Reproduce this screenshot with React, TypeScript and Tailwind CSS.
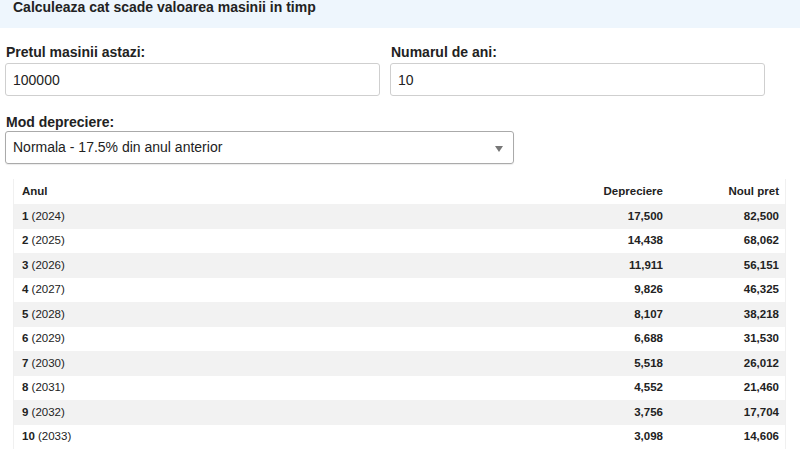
import React from "react";

interface RowType {
  label: number;
  year: number;
  depreciation: string;
  price: string;
}

const rows: RowType[] = [
  { label: 1, year: 2024, depreciation: "17,500", price: "82,500" },
  { label: 2, year: 2025, depreciation: "14,438", price: "68,062" },
  { label: 3, year: 2026, depreciation: "11,911", price: "56,151" },
  { label: 4, year: 2027, depreciation: "9,826", price: "46,325" },
  { label: 5, year: 2028, depreciation: "8,107", price: "38,218" },
  { label: 6, year: 2029, depreciation: "6,688", price: "31,530" },
  { label: 7, year: 2030, depreciation: "5,518", price: "26,012" },
  { label: 8, year: 2031, depreciation: "4,552", price: "21,460" },
  { label: 9, year: 2032, depreciation: "3,756", price: "17,704" },
  { label: 10, year: 2033, depreciation: "3,098", price: "14,606" },
];

const App = () => {
  return (
    <div className="w-[800px] h-[450px] overflow-hidden bg-white text-[#222] font-['Liberation_Sans',Arial,sans-serif]">
      <div className="h-[28px] bg-[#eef6fd] pl-[13px]">
        <h1 className="text-[14px] font-bold leading-4 -translate-y-[1px]">
          Calculeaza cat scade valoarea masinii in timp
        </h1>
      </div>

      <div className="pl-[5px] pt-[16px]">
        <div className="flex gap-[10px] w-[760px]">
          <div className="flex-1">
            <label className="block text-[14px] font-bold leading-4 pl-[1px] mb-[3px]">
              Pretul masinii astazi:
            </label>
            <input
              defaultValue="100000"
              className="w-full h-[33px] px-[7px] text-[14px] border border-[#cfcfcf] rounded-[3px] outline-none"
            />
          </div>
          <div className="flex-1">
            <label className="block text-[14px] font-bold leading-4 pl-[1px] mb-[3px]">
              Numarul de ani:
            </label>
            <input
              defaultValue="10"
              className="w-full h-[33px] px-[7px] text-[14px] border border-[#cfcfcf] rounded-[3px] outline-none"
            />
          </div>
        </div>

        <div className="mt-[18px] w-[509px]">
          <label className="block text-[14px] font-bold leading-4 pl-[1px] mb-[1px]">
            Mod depreciere:
          </label>
          <div className="relative h-[33px] border border-[#aaaaaa] rounded-[3px] shadow-[0_1px_1px_rgba(0,0,0,0.08)] flex items-center px-[7px] text-[14px]">
            Normala - 17.5% din anul anterior
            <span className="absolute right-[10px] top-[14px] w-0 h-0 border-l-[4px] border-r-[4px] border-t-[6px] border-l-transparent border-r-transparent border-t-[#777]" />
          </div>
        </div>
      </div>

      <div className="ml-[13px] mt-[15px] w-[773px] border-l border-r border-[#f0f0f0] text-[11.5px]">
        <div className="grid grid-cols-[1fr_140px_116px] h-[25px] items-center font-bold">
          <div className="pl-[8px]">Anul</div>
          <div className="text-right pr-[6px]">Depreciere</div>
          <div className="text-right pr-[6px]">Noul pret</div>
        </div>
        {rows.map((r, i) => (
          <div
            key={r.label}
            className={`grid grid-cols-[1fr_140px_116px] h-[24.5px] items-center ${
              i % 2 === 0 ? "bg-[#f2f2f2]" : "bg-white"
            }`}
          >
            <div className="pl-[8px]">
              <b>{r.label}</b> ({r.year})
            </div>
            <div className="text-right pr-[6px] font-bold">{r.depreciation}</div>
            <div className="text-right pr-[6px] font-bold">{r.price}</div>
          </div>
        ))}
      </div>
    </div>
  );
};

export default App;
